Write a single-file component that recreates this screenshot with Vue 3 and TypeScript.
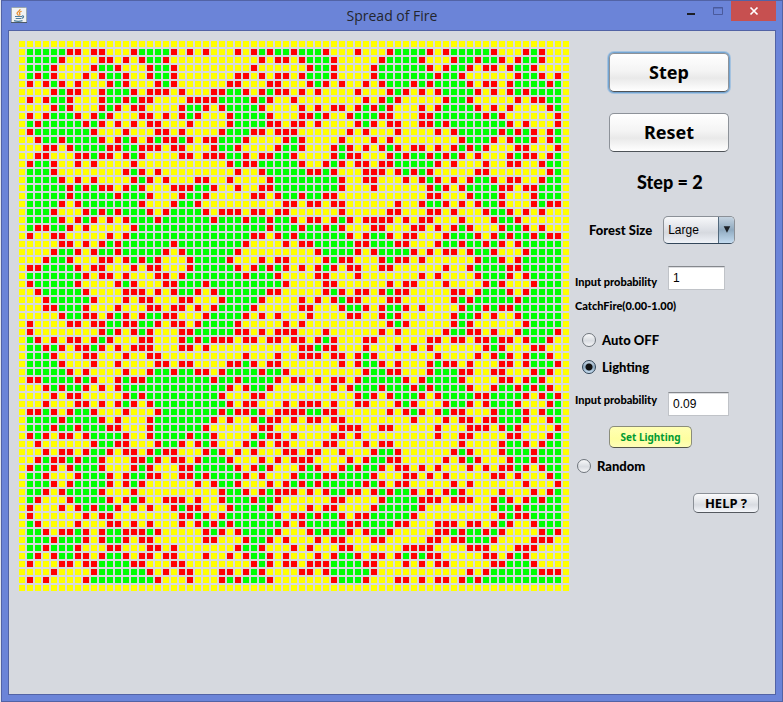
<script setup lang="ts">
import { computed, ref } from 'vue'

type Cell = '.' | 'g' | 'r'

const CELL = 6
const PITCH = 8

// '.' burnt or empty ground, 'g' standing tree, 'r' tree on fire
const forest: string[] = [
  '.....................................................................',
  '.gggggrr.rr...rggggr.r.r...r.rgrgg' + 'rgggr...r...rggggr.rgggggr...rgr...',
  '.ggggr....rr.r.rggr...........r.rr' + '.rgggr.....rggggr...rggrggr.rggr...',
  '.gggr....rggr...rggr.........r....' + '..rggr....rggggggr.rggr.rr.rggr....',
  '.grgr...r.rggr..rggr.......rr.r.rr' + '.rgggr....rgggggggrggr......rggr.r.',
  '.r.rgr.r...rgr...rgr......rr...rr.' + '..rgr.r..r.rgggrgrggggr.rr.rggggrg.',
  '....rgrr..rgggr.rrr.r...rrggr.rgrr' + '.r.r....r...rgr.r.rggggr.r.rgrgggg.',
  '.r.rggr...rggrgrr....rrrrggggrgr..' + 'r........r.rgr.....rggr.....r.rrgg.',
  '....rgr...rgr.rr....rggr.rggggr...' + '.r.r.rr.rgrgr...r.rggggr.r.r....rg.',
  '.r.rgggr.rgr...rr.r.rgr...rggggr..' + '.rrgr..rgggrr...rrggggggrgr......r.',
  '.grgggggrgr.r.r.rr...r....rggggrr.' + 'rr.r....rgr.rr..rrgrgggggggr.r...r.',
  '.rgggggggr...r...rr.r....rgggrr.rr' + 'r......r.r...r....r.rgggggrgrgr.rg.',
  '..rggrggggr.rgr.rgrrgr.rrgggr....r' + 'gr....r...r.r........rgggr.rggr.rg.',
  '...rr.rggggrrggrrr.rr...rggr....rg' + 'gr...rgr.r.rgr.rr.r.rgrgr...rr...r.',
  '..rr...rrgrr.rgr....rr.rrrggr.rrgg' + 'r....rgrr...rgrggrgrgr.r...rgrr.rg.',
  '.rggr..r.r....r...........rgrrgggg' + 'gr..rgr.rr.rrgggggr.r...r..rr..rgg.',
  '.gggr........rgr.r.........r..rggg' + 'ggrrgr...rrr.rgrgr.....rr.......rg.',
  '.ggggr.r.r....rgr.r...rr..r....rgg' + 'ggggggr..rr...r.rgr.r.rggr.rr..rgg.',
  '.gggggrgrgrr.rgr...rrrggr..r..rrgg' + 'ggggggr...r......rgr.rggggrr.rrggg.',
  '.gggggrgggggrgggr...rggr.....rr.rg' + 'grggrr...........rr...rgggr...rggg.',
  '.ggggr.rgggggggr...rggr..........r' + 'r.rr.rr......r..rggr.r.rggr...rgrr.',
  '.gggr...rgrgrgggr.rggggr.rrr.rr.rr' + '......r.....rr...rr.r...rggr.r.r...',
  '.ggggr.rgr.r.rgggrggggggrgggrggrgg' + 'r.rr.rgr.rrrr.r.rr...r...rggr......',
  '.grrggr.r.....rggggggggggggggggrgg' + 'grggrgr...rr...rr.r.rgr...rggr.r...',
  '.r..rr.....r.rgggggggggggggggrr.rg' + 'rggggggr.rggr.rr...rgggr.rgrggrgrr.',
  '.....rr.r.rgrggggggrggggggggr....r' + '.rrgggggrrgggrr...rggrggrgr.rggggg.',
  '....rggr.rggrgggggr.rggggggr......' + '...rggggr.rggggr.r.rr.rggr...rgggg.',
  '...rggr...rr.rgrgr...rggggr...r.rr' + '....rgrr...rgrr.r......rggr.rggggg.',
  '.rrggggr.rr...r.rr...rgggggr.rgrgr' + '.r.rgr.rr..rr......r..rggggrrggggg.',
  '.gggggggr.rr.r...rr.rgggggggrgggr.' + '...rr...r.......r.r....rgggr.rgggg.',
  '.rgggggr....rgr...rrgggrgggggggggr' + '....rr......r.rr...r....rgr...rggg.',
  '..rgggggr....rrr.r.rggr.rggggggrr.' + '....rgr.rr.rgrr.....rr.rgggr.rgggg.',
  '...rgggggr...r.rr...rr...rggggr...' + '.r.r.rgrr...rr......rgrgggggrggggg.',
  '...rrgggr...r...rr.rr.r.rggggr....' + '.rr...rggr.rggr.r....rggrgrrgggggg.',
  '.....rggrr.rgr.rggrr...rggggr.r.r.' + '..r....rr..rgr......rggr.r..rggggg.',
  '.r....rr.rrggrrggr.rr.rggggr.....r' + '.r..........rgr.....rgr......rgggg.',
  '.r........rgr.rgr...rrgggggrr.r.rr' + 'r...r......r.r.....rggrr.r..rggggr.',
  '.gr.r.rr.rgr...rr...rgrgrrr.rr.rr.' + 'rr.rgr...rr......rr.rr.rrgrr.rggr..',
  '.ggrgr.rrgr.r.rrr...rr.r..........' + '.rrgrr...r...r.r.r......rgr...rr...',
  '.gggr...rr...r..rr..........r...r.' + '.rrr.rr.rgr.......r....r.rgr.rggr..',
  '.ggggr...r..r....rr.rr....rrgr.rr.' + '......r.rggr.r...rgrr.r...rr.rgggr.',
  '.gggggr.r....r..rggrggrr.rggggrggr' + '.........rggrr...rgggrr..rr...rgr..',
  '.rrggggrgr..rgrrggggggggrggrggggr.' + 'rr.r.rr.rgggggr.rggggr....rr.rgr...',
  '...rgrggr.r.rgggggggggggggr.rggr..' + '.....r.rgggrgggrgrggggr..rggrgrgr..',
  '....r.rr.....rgrgggggggggr...rr...' + '........rgr.rgggr.rggggrrggggr.rgr.',
  '...r...rr.r.rgr.rgggggggggr.rr...r' + '.rrr.r..rr...rgr...rggr.rgggr...rg.',
  '.rrgr.rggr...r...rgggggggrgrrgr.rr' + 'rrggrr......r.rgr.rgrr...rgggr.rgg.',
  '.ggggrggggr.r...rgggggggr.r..rgrr.' + 'r.rr.rr........r...r.rr.rrgggr..rg.',
  '.gggrggrgggrr...rggggggr......rr..' + '......rrr..rr.....r...rrr.rgr....r.',
  '.rgr.rr.rggggr..rggggrggr....rgrr.' + 'r....rr.r.........r..rr....rr...rg.',
  '..r......rggrr...rggr.rgr...rgr.rr' + '....rr...r.rr........r....rggr.rgg.',
  '...r.rr.rggr.rr.rgrr...rgr.r.r...r' + 'r.rr..r...rggr......rgr...rgggrggg.',
  '..rgrrgrggr...rrgr.rr.rgggr...r.r.' + 'rrr....r.rggrr.....r.rgr...rggrggg.',
  '.rggr.rgggr...rgr...rrgggggr.rgr..' + '.rgr..rgrggr.rr.r.r...r.r.rrgr.rgg.',
  '.ggr...rgggr.rggrr..rrgrggggr.r...' + 'rgggrrggggr...rr.r.r.....rr.r...rg.',
  '.gggr.rggggr.rgr......r.rggr...r.r' + 'grgrgggggrgr.rr.....r.r......r...r.',
  '.ggr.rggggr...r..........rggr.rgrr' + 'r.r.rggrr.rgrggr.r.rgr....r...r.rg.',
  '.gr...rggggr.rgr..rrr.r..rgggrggr.' + '.....rr....rggggrrr.rrr..rgr.rgrgg.',
  '.r...r.rgrggr.r.r..rgrr...rggggr..' + '..r.rr....rgggggr........rggrggggg.',
  '.r......r.rr........rrgr.rggggggr.' + 'rrgrggr.rrgggggr..........rgrrgggg.',
  '.gr....r...rr.r.r...r.rgrgrggggggr' + '.rgggggrrggggrr...rrr.rr.rgr..rggg.',
  '.ggr.rrgr.rggrrrgr.....rgr.rggggr.' + '..rgrggr.rggr.....rrgrggrgr....rgr.',
  '.gggrgggr.rggr.rr......rr...rggr.r' + '...r.rr...rr.....rr.rrgggr....rrr..',
  '.ggrgggr...rr...rr.r.......rggr...' + 'r.r...rr......rrrr....rrr...rrr....',
  '.gr.rggrr.rggr.rr.rr...r..r.rggr.r' + '...r.rggr.rr.rgrgrr.....rr.rgr.....',
  '.r...rr.rrggggrr...rr........rgr.r' + 'r.rrrggggrr...r.r.rr.....rrgggr....',
  '....r....rggggggr.r.rr...rr.rgr...' + '.rr.rgggggr...........r.rggggggrrr.',
  '.r.r....rggggggggr...r...rgrgggr..' + '.....rgggr...rr.r.rr.rgrgggggggggg.',
  '.....................................................................',
]

const columns = forest[0].length
const width = columns * PITCH - 2
const height = forest.length * PITCH - 2

function cellsPath(kind: Cell): string {
  let d = ''
  forest.forEach((row, y) => {
    for (let x = 0; x < row.length; x++) {
      if (row[x] === kind) d += `M${x * PITCH} ${y * PITCH}h${CELL}v${CELL}h-${CELL}z`
    }
  })
  return d
}

const ground = computed(() => cellsPath('.'))
const trees = computed(() => cellsPath('g'))
const fires = computed(() => cellsPath('r'))

const step = ref(2)
const size = ref('Large')
const catchProbability = ref('1')
const lightingProbability = ref('0.09')
const mode = ref('lighting')
</script>

<template>
  <div class="window">
    <header class="titlebar">
      <svg class="app-icon" viewBox="0 0 16 16" aria-hidden="true">
        <rect x="0.5" y="0.5" width="15" height="15" rx="1" fill="#f2f3f3" stroke="#9aa6ae" />
        <path d="M0 15.5h16" stroke="#4d5a68" />
        <path d="M9 2.2C9.4 4 6 4.700 6 6.200c0 1 1.400 1.300 1.400 2.500M10.600 4.200C8.500 5 8 5.600 8.700 6.600c.5.700.3 1.300-.3 1.900" fill="none" stroke="#e58a2c" stroke-width="1.200" />
        <path d="M4 9.500h7M4.700 11.500h5.600M11 9c2-.6 2.300 1.600-.2 2.300M3 13.600c2.500.8 6 .8 8.500 0" fill="none" stroke="#4f7f9f" stroke-width="1.200" />
      </svg>
      <h1 class="title">Spread of Fire</h1>
      <div class="window-buttons">
        <button class="win-button" type="button" aria-label="Minimize">
          <svg viewBox="0 0 10 10"><path d="M1 7h8v2H1z" fill="#1d1f26" /></svg>
        </button>
        <button class="win-button" type="button" aria-label="Maximize">
          <svg viewBox="0 0 10 10"><path d="M.5 1.500h9v7h-9z M0 2h10" fill="none" stroke="#4a5a9c" /></svg>
        </button>
        <button class="win-button close" type="button" aria-label="Close">
          <svg viewBox="0 0 10 10"><path d="M1.500 1.500l7 7M8.500 1.500l-7 7" stroke="#fff" stroke-width="1.700" /></svg>
        </button>
      </div>
    </header>

    <main class="client">
      <svg class="forest" :width="width" :height="height" :viewBox="`0 0 ${width} ${height}`" role="img" aria-label="Forest">
        <path :d="ground" fill="#ffff00" />
        <path :d="trees" fill="#00ff00" />
        <path :d="fires" fill="#ff0000" />
      </svg>

      <form class="panel" @submit.prevent>
        <button class="big focused" type="button" @click="step++">Step</button>
        <button class="big reset" type="button" @click="step = 0">Reset</button>
        <output class="counter">Step = {{ step }}</output>

        <div class="row size-row">
          <label class="medium" for="size">Forest Size</label>
          <div class="combo">
            <select id="size" v-model="size">
              <option>Small</option>
              <option>Medium</option>
              <option>Large</option>
            </select>
            <svg class="arrow" viewBox="0 0 16 26" aria-hidden="true"><path d="M5 9h7l-3.500 7z" fill="#1c2026" /></svg>
          </div>
        </div>

        <div class="row catch-row">
          <label class="small" for="catch">Input probability</label>
          <input id="catch" v-model="catchProbability" class="field" type="text" />
        </div>
        <label class="small range" for="catch">CatchFire(0.00-1.00)</label>

        <label class="choice auto"><input v-model="mode" type="radio" name="mode" value="auto" />Auto OFF</label>
        <label class="choice lighting"><input v-model="mode" type="radio" name="mode" value="lighting" />Lighting</label>

        <div class="row lighting-row">
          <label class="small" for="lighting">Input probability</label>
          <input id="lighting" v-model="lightingProbability" class="field wide" type="text" />
        </div>
        <button class="set" type="button">Set Lighting</button>

        <label class="choice random"><input v-model="mode" type="radio" name="mode" value="random" />Random</label>
        <button class="help" type="button">HELP ?</button>
      </form>
    </main>
  </div>
</template>

<style>
body {
  margin: 0;
  background: #e4e7ee;
}
</style>

<style scoped>
* {
  box-sizing: border-box;
}

.window {
  display: flex;
  flex-direction: column;
  min-height: 100vh;
  margin-left: 1px;
  padding: 0 6px 6px 6px;
  border: 1px solid #5263a5;
  background: #6b84d8;
  font-family: "Noto Sans", "Open Sans", sans-serif;
  color: #000;
}

button,
input,
select {
  margin: 0;
  font-family: inherit;
  color: #000;
}

.titlebar {
  display: flex;
  align-items: flex-start;
  height: 29px;
}

.app-icon {
  width: 16px;
  height: 16px;
  margin: 6px 0 0 3px;
}

.title {
  flex: 1;
  margin: 5px 0 0 80px;
  font-family: "Open Sans", sans-serif;
  font-size: 14px;
  font-weight: 400;
  line-height: 20px;
  text-align: center;
  color: #23262e;
}

.window-buttons {
  display: flex;
}

.win-button {
  display: grid;
  place-items: center;
  width: 27px;
  height: 20px;
  padding: 0;
  border: 0;
  background: transparent;
}

.win-button svg {
  width: 10px;
  height: 10px;
}

.win-button.close {
  width: 45px;
  background: #c75050;
}

.client {
  display: flex;
  flex: 1;
  gap: 6px;
  padding: 10px 0 0 10px;
  border: 1px solid #5263a5;
  background: #d6d9df;
}

.forest {
  flex: none;
  shape-rendering: crispEdges;
}

.panel {
  display: flex;
  flex: 1;
  flex-direction: column;
  align-items: flex-start;
  padding-top: 12px;
}

.big {
  width: 120px;
  height: 39px;
  margin-left: 34px;
  padding: 0 0 2px;
  border: 1px solid #8d9299;
  border-bottom-color: #4e5358;
  border-radius: 5px;
  background: linear-gradient(#ffffff, #f4f4f4 45%, #e9e9e9 65%, #ffffff);
  font-size: 18px;
  font-weight: 700;
}

.focused {
  box-shadow: 0 0 0 1px #73a4d1, 0 0 0 2px #a5c3e0;
}

.reset {
  margin-top: 21px;
}

.counter,
.small,
.medium,
.choice {
  font-family: Lato, sans-serif;
  font-weight: 900;
  white-space: nowrap;
}

.counter {
  margin: 20px 0 0 62px;
  font-size: 18px;
  line-height: 20px;
}

.row {
  display: flex;
  align-items: center;
}

.medium {
  font-size: 13px;
}

.small {
  font-size: 11px;
  line-height: 16px;
}

.size-row {
  gap: 11px;
  margin: 24px 0 0 14px;
}

.combo {
  display: flex;
  position: relative;
  width: 72px;
  height: 28px;
}

.combo select {
  width: 100%;
  padding: 0 20px 0 4px;
  appearance: none;
  border: 1px solid #8b9097;
  border-bottom-color: #33475a;
  border-radius: 5px;
  background: linear-gradient(#f7f8fa, #dcdfe5 50%, #d6d9df 60%, #f0f3f8);
  font-family: "Liberation Sans", sans-serif;
  font-size: 12px;
}

.arrow {
  position: absolute;
  top: 1px;
  right: 1px;
  width: 16px;
  height: 26px;
  border-left: 1px solid #52697d;
  border-radius: 0 4px 4px 0;
  background: linear-gradient(#c5d3e0, #8fa9bf 50%, #9bb5cb 60%, #c3dbf0);
  pointer-events: none;
}

.field {
  width: 57px;
  height: 24px;
  padding: 0 4px;
  border: 1px solid #c0c3c8;
  border-top-color: #85888d;
  background: #fff;
  box-shadow: inset 0 1px 0 #dcdde0;
  font-family: "Liberation Sans", sans-serif;
  font-size: 12px;
}

.field.wide {
  width: 61px;
}

.row .small {
  width: 93px;
}

.catch-row {
  align-items: flex-end;
  margin-top: 22px;
}

.range {
  margin-top: 8px;
}

.choice {
  display: flex;
  align-items: center;
  gap: 6px;
  height: 16px;
  margin-left: 7px;
  font-size: 13px;
}

.choice input {
  width: 14px;
  height: 14px;
  appearance: none;
  border: 1px solid #6f757c;
  border-radius: 50%;
  background: linear-gradient(#f8f9fa, #d9dce1 55%, #f4f5f7);
}

.choice input:checked {
  border-color: #2f4356;
  background: radial-gradient(circle, #111 0 3px, transparent 4px), linear-gradient(#c9d6e2, #8ea9c0 50%, #c8dff3);
}

.auto {
  margin-top: 18px;
}

.lighting {
  margin-top: 11px;
}

.lighting-row {
  align-items: flex-start;
  margin-top: 17px;
}

.set {
  width: 83px;
  height: 22px;
  margin: 10px 0 0 34px;
  padding: 0;
  border: 1px solid #8b8d7a;
  border-bottom-color: #55564a;
  border-radius: 5px;
  background: linear-gradient(#ffffb4, #fefea0 60%, #ffffb8);
  font-size: 10px;
  font-weight: 700;
  color: #009a33;
}

.random {
  margin: 10px 0 0 2px;
}

.help {
  width: 66px;
  height: 20px;
  margin: 19px 0 0 118px;
  padding: 0;
  border: 1px solid #8b9097;
  border-bottom-color: #55595f;
  border-radius: 5px;
  background: linear-gradient(#fbfbfc, #dfe2e7 50%, #d8dbe1 60%, #f5f7fb);
  font-size: 13px;
  font-weight: 700;
}
</style>
